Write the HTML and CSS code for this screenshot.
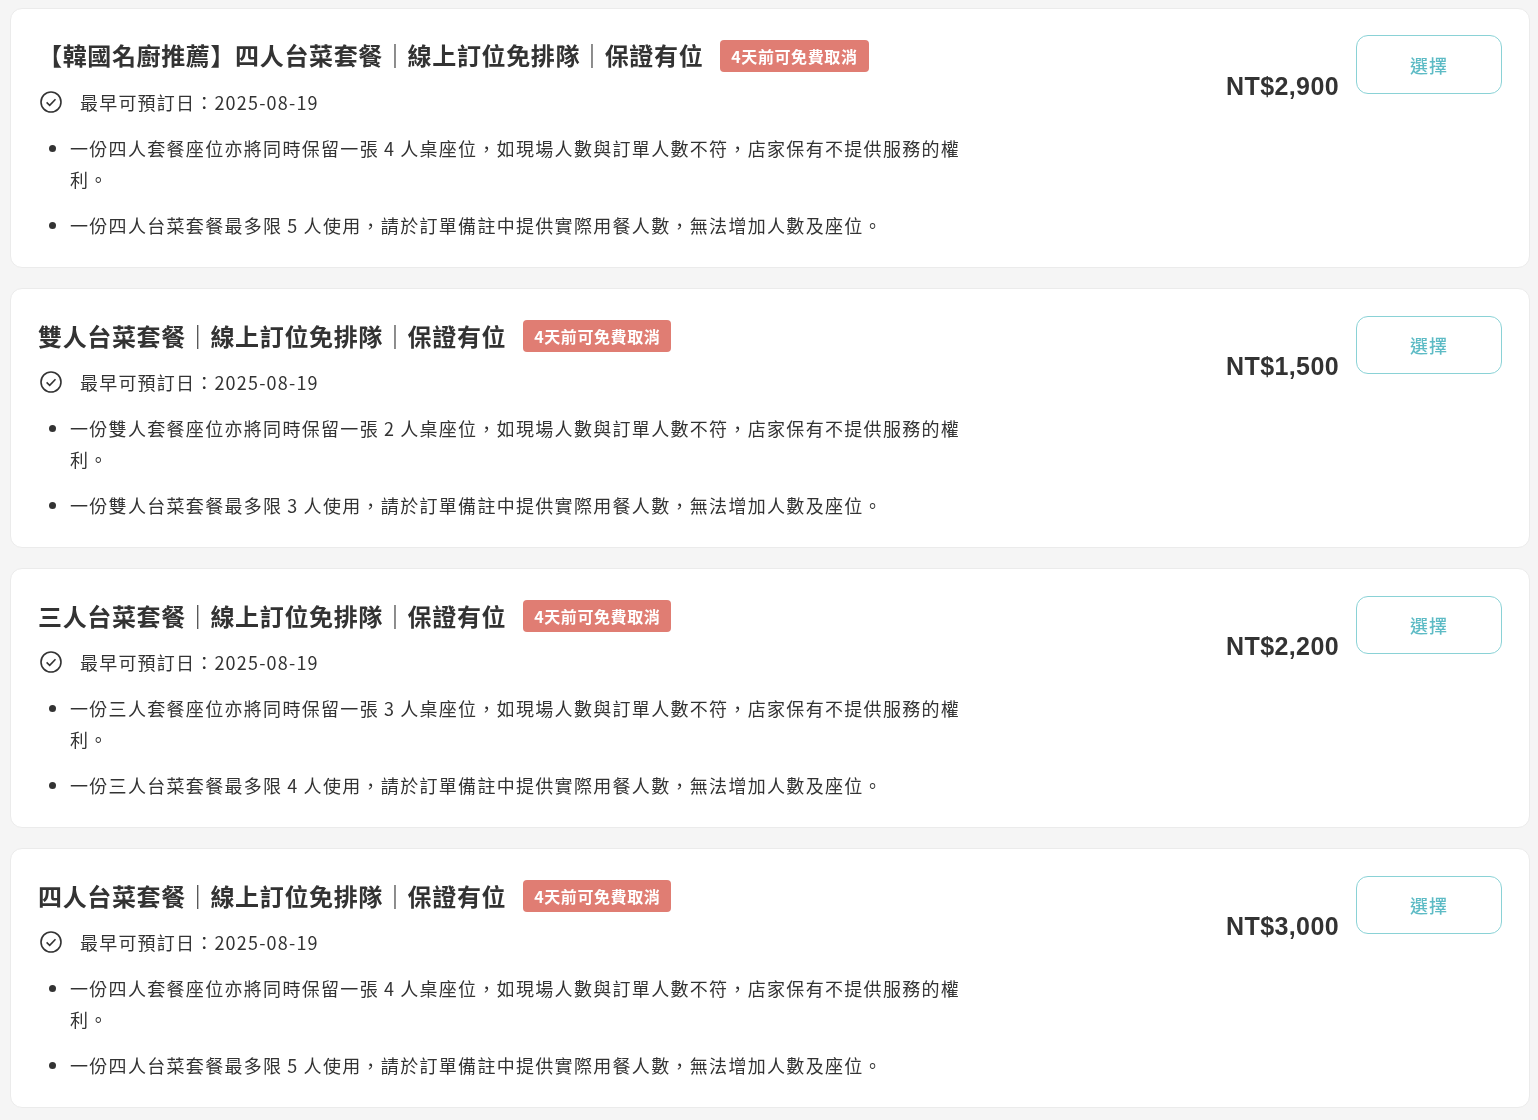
FILE: index.html
```html
<!DOCTYPE html>
<html lang="zh-Hant">
<head>
<meta charset="utf-8">
<title>套餐</title>
<link rel="stylesheet" href="styles.css">
</head>
<body>
<main class="list">
  <section class="card">
    <div class="info">
      <h3 class="title title-first"><span>【韓國名廚推薦】四人台菜套餐｜線上訂位免排隊｜保證有位</span><span class="tag">4天前可免費取消</span></h3>
      <p class="date"><svg class="check" viewBox="0 0 22 22"><circle cx="11" cy="11" r="10" /><path d="M6.6 11.4l3.1 2.9 5.8-6" /></svg><span>最早可預訂日：2025-08-19</span></p>
      <ul class="notes">
        <li>一份四人套餐座位亦將同時保留一張 4 人桌座位，如現場人數與訂單人數不符，店家保有不提供服務的權利。</li>
        <li>一份四人台菜套餐最多限 5 人使用，請於訂單備註中提供實際用餐人數，無法增加人數及座位。</li>
      </ul>
    </div>
    <div class="price">NT$2,900</div>
    <button class="select select-first">選擇</button>
  </section>
  <section class="card">
    <div class="info">
      <h3 class="title"><span>雙人台菜套餐｜線上訂位免排隊｜保證有位</span><span class="tag">4天前可免費取消</span></h3>
      <p class="date"><svg class="check" viewBox="0 0 22 22"><circle cx="11" cy="11" r="10" /><path d="M6.6 11.4l3.1 2.9 5.8-6" /></svg><span>最早可預訂日：2025-08-19</span></p>
      <ul class="notes">
        <li>一份雙人套餐座位亦將同時保留一張 2 人桌座位，如現場人數與訂單人數不符，店家保有不提供服務的權利。</li>
        <li>一份雙人台菜套餐最多限 3 人使用，請於訂單備註中提供實際用餐人數，無法增加人數及座位。</li>
      </ul>
    </div>
    <div class="price">NT$1,500</div>
    <button class="select">選擇</button>
  </section>
  <section class="card">
    <div class="info">
      <h3 class="title"><span>三人台菜套餐｜線上訂位免排隊｜保證有位</span><span class="tag">4天前可免費取消</span></h3>
      <p class="date"><svg class="check" viewBox="0 0 22 22"><circle cx="11" cy="11" r="10" /><path d="M6.6 11.4l3.1 2.9 5.8-6" /></svg><span>最早可預訂日：2025-08-19</span></p>
      <ul class="notes">
        <li>一份三人套餐座位亦將同時保留一張 3 人桌座位，如現場人數與訂單人數不符，店家保有不提供服務的權利。</li>
        <li>一份三人台菜套餐最多限 4 人使用，請於訂單備註中提供實際用餐人數，無法增加人數及座位。</li>
      </ul>
    </div>
    <div class="price">NT$2,200</div>
    <button class="select">選擇</button>
  </section>
  <section class="card">
    <div class="info">
      <h3 class="title"><span>四人台菜套餐｜線上訂位免排隊｜保證有位</span><span class="tag">4天前可免費取消</span></h3>
      <p class="date"><svg class="check" viewBox="0 0 22 22"><circle cx="11" cy="11" r="10" /><path d="M6.6 11.4l3.1 2.9 5.8-6" /></svg><span>最早可預訂日：2025-08-19</span></p>
      <ul class="notes">
        <li>一份四人套餐座位亦將同時保留一張 4 人桌座位，如現場人數與訂單人數不符，店家保有不提供服務的權利。</li>
        <li>一份四人台菜套餐最多限 5 人使用，請於訂單備註中提供實際用餐人數，無法增加人數及座位。</li>
      </ul>
    </div>
    <div class="price">NT$3,000</div>
    <button class="select">選擇</button>
  </section>
</main>
</body>
</html>
```
FILE: styles.css
```css
* { box-sizing: border-box; }
html, body { margin: 0; padding: 0; }
body {
  background: #f5f5f5;
  color: #333;
  font-family: "Noto Sans CJK TC", "Noto Sans", sans-serif;
}
.list {
  display: flex;
  flex-direction: column;
  gap: 20px;
  padding: 8px 8px 0 10px;
}
.card {
  display: flex;
  align-items: flex-start;
  height: 260px;
  padding: 26px 27px 0 27px;
  background: #fff;
  border: 1px solid #ebebeb;
  border-radius: 12px;
}
.card > * { will-change: transform; }
.info { width: 935px; }
.title {
  display: flex;
  align-items: center;
  height: 34px;
  margin: 4px 0 0;
  font-size: 24px;
  line-height: 34px;
  font-weight: 700;
  letter-spacing: .64px;
  white-space: nowrap;
}
.title-first span:first-child { margin-top: -2px; }
.tag {
  margin-left: 17px;
  padding: 0 11px;
  height: 32px;
  background: #e07d73;
  border-radius: 4px;
  color: #fff;
  font-size: 16px;
  line-height: 32px;
  letter-spacing: .6px;
}
.date {
  display: flex;
  align-items: center;
  gap: 18px;
  height: 26px;
  margin: 16px 0 0 2px;
  font-size: 18px;
  letter-spacing: 1.2px;
}
.check {
  width: 22px;
  height: 22px;
  fill: none;
  stroke: #333;
  stroke-width: 1.6;
}
.notes {
  margin: 18px 0 0;
  padding: 0 0 0 32px;
  font-size: 18px;
  line-height: 31px;
  letter-spacing: 1.31px;
  word-spacing: -.4px;
}
.notes li + li { margin-top: 15px; }
.price {
  margin: 33px 17px 0 auto;
  font-family: "Liberation Sans", sans-serif;
  font-size: 25px;
  line-height: 36px;
  font-weight: 700;
  letter-spacing: .4px;
}
.select {
  width: 146px;
  height: 58px;
  margin-top: 1px;
  background: #fff;
  border: 1px solid #8ad2d6;
  border-radius: 12px;
  color: #5dbbc5;
  font-family: inherit;
  font-size: 18px;
  font-weight: 500;
  letter-spacing: 1px;
}
.select-first { height: 59px; margin-top: 0; }
```
